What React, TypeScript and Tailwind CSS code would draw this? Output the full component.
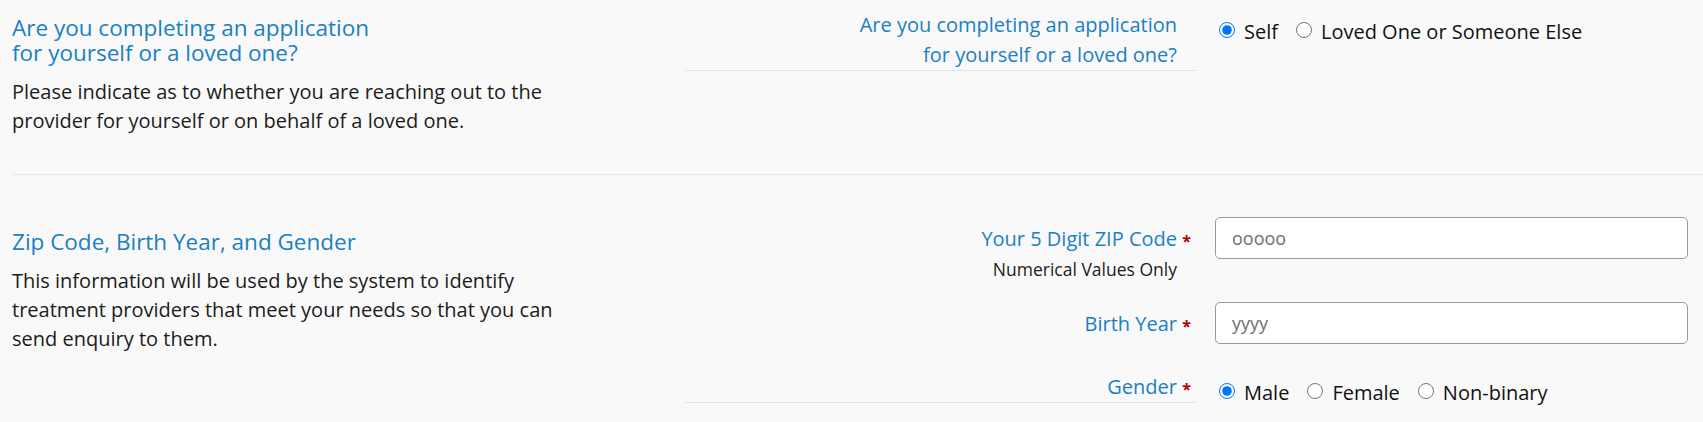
import React from 'react'

function Req() {
  return (
    <span className="w-[19px] shrink-0 text-center text-[16px] font-bold text-[#b00000] translate-y-[5px]">*</span>
  )
}

function Radio({ name, label, checked, first }: { name: string; label: string; checked?: boolean; first?: boolean }) {
  return (
    <label className={`flex items-start ${first ? '' : 'ml-[14px]'}`}>
      <input
        type="radio"
        name={name}
        defaultChecked={checked}
        className="mt-[5px] ml-[4px] mr-[9px] h-[16px] w-[16px] shrink-0"
      />
      <span className="text-[20px] leading-[30px] text-[#111]">{label}</span>
    </label>
  )
}

export default function App() {
  return (
    <main className="min-h-screen bg-[#f9f9f9] pl-3 font-['Open_Sans','Liberation_Sans',sans-serif]">
      <section className="grid grid-cols-[654px_511px_1fr] gap-x-[19px] pt-[10px] pb-[39px] pr-[15px]">
        <div className="mt-[5px] max-w-[560px]">
          <h2 className="text-[22.5px] leading-[25px] text-[#1a80c4]">
            Are you completing an application
            <br />
            for yourself or a loved one?
          </h2>
          <p className="mt-[12px] text-[20px] leading-[29px] text-[#1c1c1c]">
            Please indicate as to whether you are reaching out to the provider for yourself or on behalf of a loved one.
          </p>
        </div>

        <div className="self-start border-b border-[#e4e4e4]">
          <div className="flex justify-end">
            <span className="text-right text-[20px] leading-[30px] text-[#1a80c4]">
              Are you completing an application
              <br />
              for yourself or a loved one?
            </span>
            <span className="w-[19px] shrink-0" />
          </div>
        </div>

        <div className="flex pt-[7px]">
          <Radio name="who" label="Self" checked first />
          <Radio name="who" label="Loved One or Someone Else" />
        </div>
      </section>

      <div className="border-t border-[#e8e8e8]" />

      <section className="grid grid-cols-[654px_1fr] gap-x-[19px] pt-[42px] pr-[15px]">
        <div className="max-w-[560px] pt-[12px]">
          <h2 className="text-[22.5px] leading-[25px] text-[#1a80c4]">Zip Code, Birth Year, and Gender</h2>
          <p className="mt-[12px] text-[20px] leading-[29px] text-[#1c1c1c]">
            This information will be used by the system to identify treatment providers that meet your needs so that you can send enquiry to them.
          </p>
        </div>

        <div>
          <div className="grid grid-cols-[511px_1fr] gap-x-[19px]">
            <div className="pt-[7px]">
              <div className="flex justify-end">
                <span className="text-[20px] leading-[30px] text-[#1a80c4]">Your 5 Digit ZIP Code</span>
                <Req />
              </div>
              <div className="mt-[3px] pr-[19px] text-right text-[17.5px] leading-[24px] text-[#1c1c1c]">
                Numerical Values Only
              </div>
            </div>
            <input
              placeholder="ooooo"
              className="h-[42px] w-full rounded-[5px] border border-[#9a9a9a] bg-white px-[16px] text-[18px] text-[#222] placeholder:text-[#6f6f6f] outline-none"
            />
          </div>

          <div className="mt-[21px] grid grid-cols-[511px_1fr] gap-x-[19px]">
            <div className="pt-[7px]">
              <div className="flex justify-end">
                <span className="text-[20px] leading-[30px] text-[#1a80c4]">Birth Year</span>
                <Req />
              </div>
            </div>
            <input
              placeholder="yyyy"
              className="h-[42px] w-full rounded-[5px] border border-[#9a9a9a] bg-white px-[16px] text-[18px] text-[#222] placeholder:text-[#6f6f6f] outline-none"
            />
          </div>

          <div className="mt-[28px] grid grid-cols-[511px_1fr] gap-x-[19px]">
            <div className="self-start border-b border-[#e4e4e4]">
              <div className="flex justify-end">
                <span className="text-[20px] leading-[30px] text-[#1a80c4]">Gender</span>
                <Req />
              </div>
            </div>
            <div className="flex pt-[6px]">
              <Radio name="gender" label="Male" checked first />
              <Radio name="gender" label="Female" />
              <Radio name="gender" label="Non-binary" />
            </div>
          </div>
        </div>
      </section>
    </main>
  )
}
